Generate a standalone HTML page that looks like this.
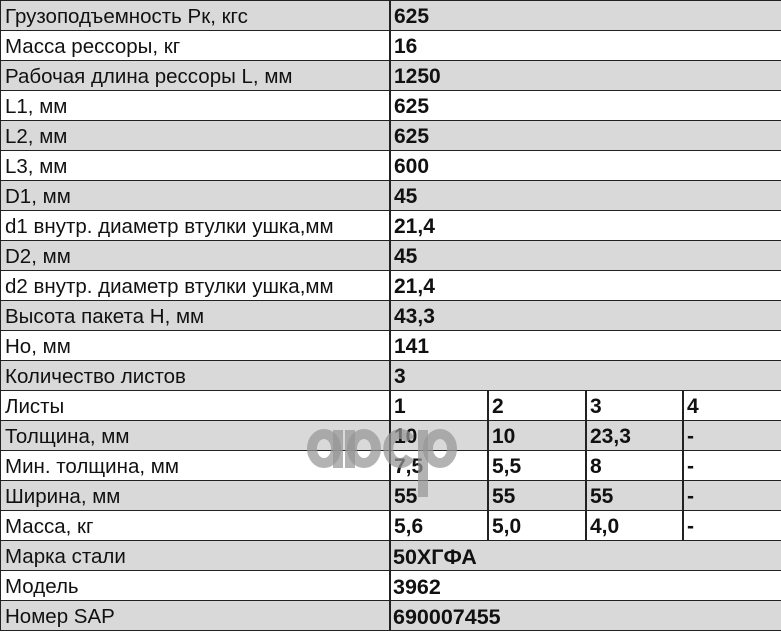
<!DOCTYPE html>
<html><head><meta charset="utf-8"><style>
html,body{margin:0;padding:0;background:#fff;}
body{width:781px;height:631px;position:relative;overflow:hidden;font-family:"Liberation Sans",Arial,sans-serif;color:#111;}
.r{position:absolute;left:0;width:781px;height:30px;border-top:1px solid #222;box-sizing:border-box;}
.g{background:#d9d9d9;}
.c{position:absolute;top:0;height:29px;line-height:32px;font-size:20.5px;white-space:nowrap;}
.l{left:5px;}
.v{font-weight:bold;font-size:21px;}
.vl{position:absolute;top:0;height:631px;width:1.5px;background:#222;}
.n{display:inline-block;}
.v .n{font-size:21.5px;}
</style></head><body>
<div class="r g" style="top:0"><span class="c l">Грузоподъемность Рк, кгс</span><span class="c v" style="left:394px">625</span></div>
<div class="r" style="top:30px"><span class="c l">Масса рессоры, кг</span><span class="c v" style="left:394px">16</span></div>
<div class="r g" style="top:60px"><span class="c l">Рабочая длина рессоры L, мм</span><span class="c v" style="left:394px">1250</span></div>
<div class="r" style="top:90px"><span class="c l">L1, мм</span><span class="c v" style="left:394px">625</span></div>
<div class="r g" style="top:120px"><span class="c l">L2, мм</span><span class="c v" style="left:394px">625</span></div>
<div class="r" style="top:150px"><span class="c l">L3, мм</span><span class="c v" style="left:394px">600</span></div>
<div class="r g" style="top:180px"><span class="c l">D1, мм</span><span class="c v" style="left:394px">45</span></div>
<div class="r" style="top:210px"><span class="c l">d1 внутр. диаметр втулки ушка,мм</span><span class="c v" style="left:394px">21,4</span></div>
<div class="r g" style="top:240px"><span class="c l">D2, мм</span><span class="c v" style="left:394px">45</span></div>
<div class="r" style="top:270px"><span class="c l">d2 внутр. диаметр втулки ушка,мм</span><span class="c v" style="left:394px">21,4</span></div>
<div class="r g" style="top:300px"><span class="c l">Высота пакета H, мм</span><span class="c v" style="left:394px">43,3</span></div>
<div class="r" style="top:330px"><span class="c l">Ho, мм</span><span class="c v" style="left:394px">141</span></div>
<div class="r g" style="top:360px"><span class="c l">Количество листов</span><span class="c v" style="left:394px">3</span></div>
<div class="r" style="top:390px"><span class="c l">Листы</span><span class="c v" style="left:394px">1</span><span class="c v" style="left:492px">2</span><span class="c v" style="left:590px">3</span><span class="c v" style="left:687px">4</span></div>
<div class="r g" style="top:420px"><span class="c l">Толщина, мм</span><span class="c v" style="left:394px">10</span><span class="c v" style="left:492px">10</span><span class="c v" style="left:590px">23,3</span><span class="c v" style="left:687px">-</span></div>
<div class="r" style="top:450px"><span class="c l">Мин. толщина, мм</span><span class="c v" style="left:394px">7,5</span><span class="c v" style="left:492px">5,5</span><span class="c v" style="left:590px">8</span><span class="c v" style="left:687px">-</span></div>
<div class="r g" style="top:480px"><span class="c l">Ширина, мм</span><span class="c v" style="left:394px">55</span><span class="c v" style="left:492px">55</span><span class="c v" style="left:590px">55</span><span class="c v" style="left:687px">-</span></div>
<div class="r" style="top:510px"><span class="c l">Масса, кг</span><span class="c v" style="left:394px">5,6</span><span class="c v" style="left:492px">5,0</span><span class="c v" style="left:590px">4,0</span><span class="c v" style="left:687px">-</span></div>
<div class="r g" style="top:540px"><span class="c l"><span class="n">Марка стали</span></span><span class="c v" style="left:393px"><span class="n">50ХГФА</span></span></div>
<div class="r" style="top:570px"><span class="c l"><span class="n">Модель</span></span><span class="c v" style="left:393px"><span class="n">3962</span></span></div>
<div class="r g" style="top:600px;height:31px;border-bottom:1px solid #222"><span class="c l"><span class="n">Номер SAP</span></span><span class="c v" style="left:393px"><span class="n">690007455</span></span></div>
<div class="vl" style="left:0;width:1px"></div>
<div class="vl" style="left:389px"></div>
<div class="vl" style="left:487px;top:390px;height:150px"></div>
<div class="vl" style="left:585px;top:390px;height:150px"></div>
<div class="vl" style="left:682px;top:390px;height:150px"></div>
<svg style="position:absolute;left:0;top:0" width="781" height="631">
<g fill="none" stroke="rgba(150,150,150,0.72)" stroke-width="10">
<ellipse cx="324" cy="448.5" rx="12" ry="14.5"/>
<line x1="338" y1="430" x2="338" y2="468"/>
<line x1="350" y1="430" x2="350" y2="468"/>
<ellipse cx="364" cy="448.5" rx="12" ry="14.5"/>
<path d="M410 440 A12 14.5 0 1 0 410 457"/>
<line x1="423" y1="430" x2="423" y2="497"/>
<ellipse cx="440" cy="448.5" rx="12" ry="14.5"/>
</g>
</svg>
</body></html>
